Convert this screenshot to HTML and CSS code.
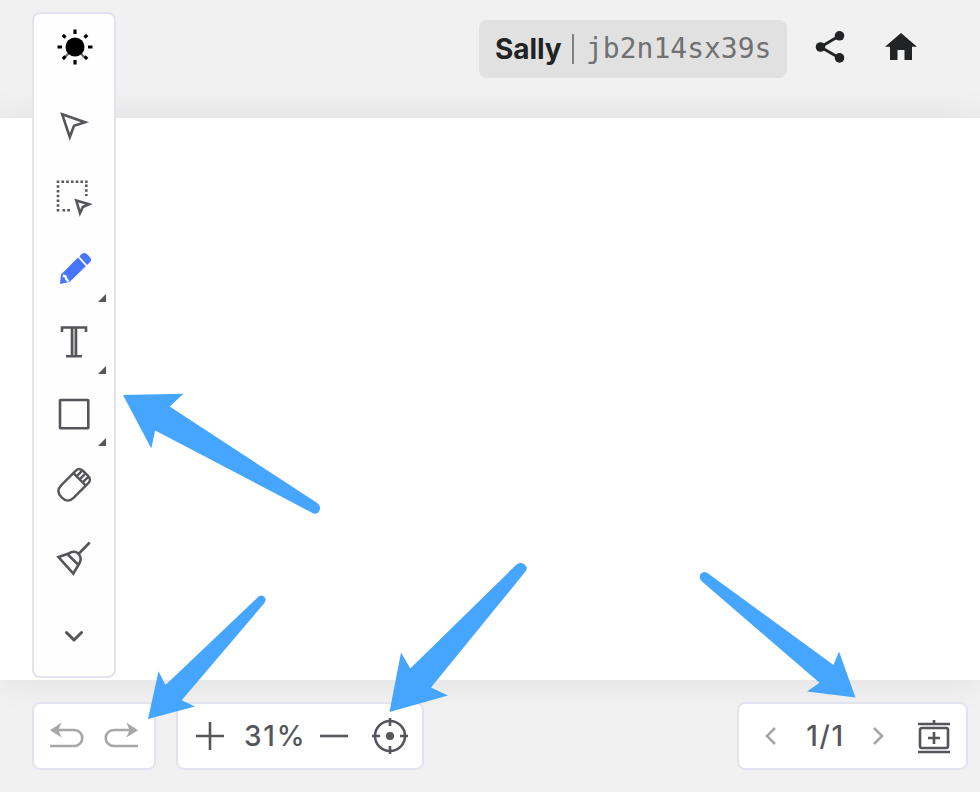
FILE: index.html
```html
<!DOCTYPE html>
<html lang="en">
<head>
<meta charset="utf-8">
<title>Whiteboard</title>
<link rel="stylesheet" href="styles.css">
</head>
<body>
<div class="app">
  <header class="topbar">
    <div class="room"><span class="user">Sally</span><span class="divider"></span><span class="code">jb2n14sx39s</span></div>
    <svg class="top-icon share" viewBox="810 27 40 40"><path d="M839.500 35.700 820.500 47 839.500 58" fill="none" stroke="#212324" stroke-width="2.800"/><g fill="#212324"><circle cx="839.500" cy="35.800" r="4.800"/><circle cx="820.500" cy="47" r="4.800"/><circle cx="839.500" cy="57.900" r="4.800"/></g></svg>
    <svg class="top-icon home" viewBox="881 27 40 40"><path d="M901 33 917 46.800H912V60H904.500V50H897.500V60H890V46.800H885Z" fill="#212324"/></svg>
  </header>
  <main class="board"></main>
  <footer class="bottombar">
    <div class="panel history">
      <svg class="icon muted" viewBox="48 718 36 36"><path d="M54 730H74.300A8 8 0 0 1 74.300 746H50"/><path class="solid" d="M50 730.300 61.700 722.500 58.300 730 61.700 737.500Z"/></svg>
      <svg class="icon muted" viewBox="104 718 36 36"><path d="M134 730H113.700A8 8 0 0 0 113.700 746H138"/><path class="solid" d="M138 730.300 126.300 722.500 129.700 730 126.300 737.500Z"/></svg>
    </div>
    <div class="panel zoom">
      <svg class="icon" viewBox="192 718 36 36"><path d="M196 736H224M210 722V750"/></svg>
      <span class="percent">31%</span>
      <svg class="icon" viewBox="316 718 36 36"><path d="M320 736H348"/></svg>
      <svg class="icon target" viewBox="370 716 40 40"><circle cx="390" cy="736" r="15"/><circle class="solid" cx="390" cy="736" r="4"/><path d="M390 718V726M390 746V754M372 736H380M400 736H408"/></svg>
    </div>
    <div class="panel pages">
      <svg class="chevron muted" viewBox="761 724 20 24"><path d="M775 728 767 736 775 744"/></svg>
      <span class="count">1/1</span>
      <svg class="chevron muted" viewBox="868 724 20 24"><path d="M874 728 882 736 874 744"/></svg>
      <svg class="icon add" viewBox="914 716 40 40"><path d="M918 724H950M934 720V724M918 752H950M934 732V744M928 738H940"/><rect x="920" y="728" width="28" height="20" rx="2"/></svg>
    </div>
  </footer>
  <nav class="toolbar">
    <svg class="tool first" viewBox="34 14 80 76"><path class="rays-soft" d="M75 47 65 57M75 47 84 57"/><circle class="sun" cx="75" cy="47" r="9.500"/><path class="rays" d="M75 29.500V34M75 60V64.500M57.500 47H62M88 47H92.500M62.800 35 65.500 37.600M84.500 37.600 87.200 35M62.800 59 65.500 56.400M84.500 56.400 87.200 59"/></svg>
    <svg class="tool" viewBox="34 90 80 72"><path d="M62.200 114.300 85 122.200 74 125.800 69.800 137Z"/></svg>
    <svg class="tool" viewBox="34 162 80 72"><path class="dots" d="M56.700 181.700H87.600M58 185.200V212M62.500 210.300H71"/><path class="dots" d="M86.300 184.500V196"/><path d="M76.300 200.500 89 204.300 82.800 207 80 213Z"/></svg>
    <svg class="tool" viewBox="34 234 80 72"><g class="pencil"><path d="M60 284 61 274.500 78 257.500 85.800 266.300 69.500 282Z"/><path d="M79.300 256.200 81.700 254Q84 252 86.800 254L89.500 256.800Q92 259.500 90.500 261.500L87 265Z"/></g><path class="pencil-tip" d="M62.800 275.500 65.500 276.500 66.500 279.300 68.500 281.500"/><path class="corner" d="M106 294V302H98Z"/></svg>
    <svg class="tool" viewBox="34 306 80 72"><path class="shade" d="M74 327V356"/><path d="M62 332V327.500H86V332M66 356.200H82M72 328V356M76 328V356"/><path class="corner" d="M106 366V374H98Z"/></svg>
    <svg class="tool" viewBox="34 378 80 72"><rect x="60" y="400" width="28.300" height="28.300" rx=".5"/><path class="corner" d="M106 438V446H98Z"/></svg>
    <svg class="tool eraser" viewBox="34 450 80 72"><g transform="rotate(45 73.800 485.200)"><path d="M65 476V494Q65 502.500 73.800 502.500T82.600 494V473.500Q82.600 468.500 77 468.500H70.600Q65 468.500 65 473.500ZM65 477H82.600M69.500 469V477M73.800 468.500V477M78.100 469V477"/></g></svg>
    <svg class="tool" viewBox="34 522 80 72"><path d="M89.700 542.500 78.500 554M58.500 557 68 553.800C73 550.500 77 551.500 79 554.500C81.500 557.500 81 561 78.700 564.500L73.300 573.500ZM67.300 554 78.500 565"/></svg>
    <svg class="tool last" viewBox="34 594 80 82"><path d="M66.500 632.500 74 640 81.500 632.500"/></svg>
  </nav>
  <svg class="arrows" viewBox="0 0 980 792"><g fill="#46a6ff">
    <path d="M123 395 183.500 393.700 169.700 406.500 316.500 502.500Q321.500 506 319.500 510.500Q317 515.500 312.500 513L155.200 430.500 151.300 448.500Z"/>
    <path d="M148 719 158.500 671.300 165.500 685 258.500 596.600Q262 594 264.500 597Q267 600 264 603.500L181.700 700.300 195 706.500Z"/>
    <path d="M389.500 712 401 652.500 410.300 668.500 516 565Q520.500 561.500 524.500 564.500Q528.500 568 525.500 571.500L431 687.500 448 695.500Z"/>
    <path d="M855.500 697.500 839 651.500 833.500 665 707.500 573Q703.500 570.500 700.500 574Q698.300 578 702 581.500L819.500 682.700 807 691.500Z"/>
  </g></svg>
</div>
</body>
</html>
```
FILE: styles.css
```css
* { box-sizing: border-box; }
body { margin: 0; font-family: Inter, "Liberation Sans", sans-serif; font-size: 28px; color: #55555c; }
svg { display: block; flex: none; overflow: visible; }
.app { position: relative; width: 980px; height: 792px; display: grid; grid-template-rows: 118px 562px 112px; background: #f1f1f1; overflow: hidden; }
.topbar { display: flex; align-items: flex-start; padding: 20px 59px 0 479px; }
.room { width: 308px; height: 58px; flex: none; display: flex; align-items: center; padding-left: 16px; border-radius: 8px; background: #e1e1e1; white-space: nowrap; }
.user { width: 66px; color: #212324; font-weight: 700; letter-spacing: -.1px; }
.divider { width: 2px; height: 30px; margin: 0 12px 0 11px; background: #7e7f80; }
.code { position: relative; top: -1px; font-family: "DejaVu Sans Mono", monospace; color: #707172; }
.top-icon { width: 40px; height: 40px; margin-top: 7px; }
.share { margin-left: 23px; }
.home { margin-left: 31px; }
.board { background: #fff; box-shadow: 0 0 36px rgba(0, 0, 0, .08); }
.bottombar { display: flex; padding: 22px 12px 0 32px; position: relative; }
.panel { height: 68px; display: flex; align-items: center; border: 2px solid #e1e3ef; border-radius: 8px; background: #fff; }
.history { width: 124px; gap: 20px; padding-left: 14px; }
.zoom { width: 248px; margin-left: 20px; padding-left: 14px; }
.pages { width: 231px; margin-left: auto; padding-left: 22px; }
.icon { width: 36px; height: 36px; }
.icon, .tool, .chevron { fill: none; stroke: #55555c; stroke-width: 2.6; }
.chevron { width: 20px; height: 24px; }
.muted { stroke: #a7a7aa; }
.icon .solid { fill: #55555c; stroke: none; }
.muted .solid { fill: #a7a7aa; }
.percent { width: 60px; margin: 0 14px; padding-left: 2px; text-align: center; letter-spacing: 1.8px; font-weight: 450; white-space: nowrap; }
.target, .add { width: 40px; height: 40px; }
.target { margin-left: 18px; }
.count { width: 44px; margin: 0 22px 0 21px; padding-left: 3px; text-align: center; white-space: nowrap; letter-spacing: 1.7px; font-weight: 450; }
.add { margin-left: 26px; }
.toolbar { position: absolute; left: 32px; top: 12px; width: 84px; height: 666px; display: flex; flex-direction: column; border: 2px solid #e1e3ef; border-radius: 8px; background: #fefefe; }
.tool { width: 80px; height: 72px; }
.first { height: 76px; }
.last { height: 82px; stroke-width: 3; stroke-linecap: round; stroke-linejoin: round; }
.eraser { stroke-width: 2.4; }
.sun { fill: #000; stroke: none; }
.tool .rays { stroke: #000; stroke-width: 3.2; }
.tool .rays-soft { stroke: #68686d; stroke-width: 2.2; }
.tool .dots { stroke-dasharray: 2.6 2.15; stroke-width: 2.6; }
.tool .shade { stroke: #d2d2d6; stroke-width: 3; }
.tool .corner { fill: #55555c; stroke: none; }
.pencil { fill: #4675ff; stroke: none; }
.tool .pencil-tip { stroke: #fff; stroke-width: 2.4; }
.arrows { position: absolute; inset: 0; width: 980px; height: 792px; pointer-events: none; }
```
